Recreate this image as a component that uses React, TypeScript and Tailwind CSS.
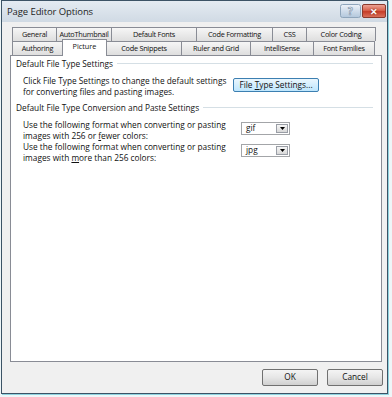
import React from "react";

const row1: [string, string][] = [
  ["General", "w-[45px]"],
  ["AutoThumbnail", "w-[55px]"],
  ["Default Fonts", "w-[85px]"],
  ["Code Formatting", "w-[76px]"],
  ["CSS", "w-[34px]"],
  ["Color Coding", "w-[69px]"],
];
const row2: [string, string][] = [
  ["Authoring", "w-[51px]"],
  ["Picture", "w-[45px]"],
  ["Code Snippets", "w-[75px]"],
  ["Ruler and Grid", "w-[69px]"],
  ["IntelliSense", "w-[63px]"],
  ["Font Families", "w-[61px]"],
];

function Tab({ label, w, first }: { label: string; w: string; first: boolean }) {
  return (
    <div
      className={`${w} h-[14px] shrink-0 flex items-center justify-center border-t border-r border-[#898c95] ${
        first ? "border-l" : ""
      } bg-[#e8e8e8] bg-[linear-gradient(to_bottom,#f6f6f6,#dedede)] text-[#111] leading-none text-[7.3px] tracking-[-0.25px] whitespace-nowrap`}
    >
      {label}
    </div>
  );
}

function Select({ value }: { value: string }) {
  return (
    <div className="w-[49px] h-[13px] border border-[#a3a5a8] bg-white flex items-center justify-between pl-[4px] pr-[1px]">
      <span className="leading-none">{value}</span>
      <div className="w-[12px] h-[9px] border border-[#9a9ea6] bg-[#e6e6e6] bg-[linear-gradient(to_bottom,#f6f6f6,#d8d8d8)] flex items-center justify-center">
        <svg width="5" height="3" viewBox="0 0 5 3">
          <polygon points="0,0 5,0 2.5,3" fill="#000" />
        </svg>
      </div>
    </div>
  );
}

function HelpButton() {
  return (
    <svg width="21" height="14" viewBox="0 0 21 14">
      <defs>
        <linearGradient id="helpGrad" x1="0" y1="0" x2="0" y2="1">
          <stop offset="0" stopColor="#eef3f9" />
          <stop offset="0.5" stopColor="#cfdcea" />
          <stop offset="1" stopColor="#b2c6db" />
        </linearGradient>
      </defs>
      <rect x="0.5" y="0.5" width="20" height="13" rx="2" fill="url(#helpGrad)" stroke="#8fa5bb" />
      <text
        x="10.5"
        y="11"
        textAnchor="middle"
        fontSize="10"
        fontWeight="bold"
        fontFamily="Open Sans, sans-serif"
        fill="#ffffff"
        stroke="#6d869e"
        strokeWidth="0.6"
      >
        ?
      </text>
    </svg>
  );
}

export default function App() {
  return (
    <div className="w-[392px] h-[397px] bg-[#eef6f8] overflow-hidden font-['Open_Sans',sans-serif] text-[8.3px] text-[#111]">
      <div className="ml-[1px] w-[387px] h-[394px] border border-[#3c5366] shadow-[1px_1px_0_#8fd3df] flex flex-col bg-[#f0f0f0]">
        {/* title bar */}
        <div className="h-[21px] shrink-0 flex items-center pl-[5px] pr-[1px] bg-[#dbe3eb] bg-[linear-gradient(to_bottom,#e4ebf2,#d0dae4)]">
          <span className="flex-1 text-[9.5px] text-[#1e1e1e] leading-none tracking-[-0.1px]">Page Editor Options</span>
          <div className="flex items-center gap-[1px] self-start mt-[3px]">
            <HelpButton />
            <div className="w-[24px] h-[14px] rounded-[2px] border border-[#8b3b2e] bg-red-600 bg-[linear-gradient(to_bottom,#eca294,#d8634e_45%,#c63d28_55%,#d9705b)] flex items-center justify-center text-white text-[9px] font-bold leading-none [text-shadow:0_0_2px_#6a2419]">
              ✕
            </div>
          </div>
        </div>

        {/* client */}
        <div className="flex-1 flex flex-col pt-[5px]">
          <div className="ml-[10px] flex flex-col">
            <div className="flex">
              {row1.map(([l, w], i) => (
                <Tab key={l} label={l} w={w} first={i === 0} />
              ))}
            </div>
            <div className="flex items-end">
              {row2.map(([l, w], i) =>
                l === "Picture" ? (
                  <div
                    key={l}
                    className={`${w} shrink-0 h-[17px] -mt-[3px] -mb-[1px] relative z-10 bg-white border-t border-r border-l border-[#898c95] -ml-px flex items-center justify-center leading-none pb-[2px] text-[7.3px]`}
                  >
                    {l}
                  </div>
                ) : (
                  <Tab key={l} label={l} w={w} first={i === 0} />
                )
              )}
            </div>
          </div>

          {/* panel */}
          <div className="ml-[8px] w-[372px] h-[307px] shrink-0 bg-white border border-[#898c95] flex flex-col pt-[2px]">
            {/* group 1 */}
            <div className="flex items-center h-[11px] pl-[5px] pr-[8px]">
              <span className="leading-[11px] whitespace-nowrap">Default File Type Settings</span>
              <div className="flex-1 h-px bg-[#d5dfe5] ml-[4px]" />
            </div>
            <div className="flex mt-[6px] pl-[12px]">
              <div className="w-[210px] leading-[11px] whitespace-nowrap">
                <div>Click File Type Settings to change the default settings</div>
                <div>for converting files and pasting images.</div>
              </div>
              <div className="mt-[3px] w-[86px] h-[14px] rounded-[2px] border border-[#3c7fb1] bg-[#d4eefc] bg-[linear-gradient(to_bottom,#eaf6fd,#bee6fd)] flex items-center justify-center leading-none">
                <span>
                  File <span className="underline">T</span>ype Settings...
                </span>
              </div>
            </div>

            {/* group 2 */}
            <div className="flex items-center h-[11px] pl-[5px] pr-[8px] mt-[5px]">
              <span className="leading-[11px] whitespace-nowrap">Default File Type Conversion and Paste Settings</span>
              <div className="flex-1 h-px bg-[#d5dfe5] ml-[4px]" />
            </div>
            <div className="flex mt-[6px] pl-[12px]">
              <div className="w-[218px] leading-[11px] whitespace-nowrap">
                <div>Use the following format when converting or pasting</div>
                <div>
                  images with 256 or <span className="underline">f</span>ewer colors:
                </div>
              </div>
              <div className="mt-[3px]">
                <Select value="gif" />
              </div>
            </div>
            <div className="flex pl-[12px]">
              <div className="w-[218px] leading-[11px] whitespace-nowrap">
                <div>Use the following format when converting or pasting</div>
                <div>
                  images with <span className="underline">m</span>ore than 256 colors:
                </div>
              </div>
              <div className="mt-[3px]">
                <Select value="jpg" />
              </div>
            </div>
          </div>

          {/* buttons */}
          <div className="flex justify-end gap-[9px] mt-[7px] pr-[4px]">
            {["OK", "Cancel"].map((b) => (
              <div
                key={b}
                className="w-[56px] h-[17px] rounded-[2px] border border-[#707070] bg-[#e2e2e2] bg-[linear-gradient(to_bottom,#f4f4f4,#e6e6e6_50%,#d0d0d0)] flex items-center justify-center leading-none"
              >
                {b}
              </div>
            ))}
          </div>
        </div>
      </div>
    </div>
  );
}
